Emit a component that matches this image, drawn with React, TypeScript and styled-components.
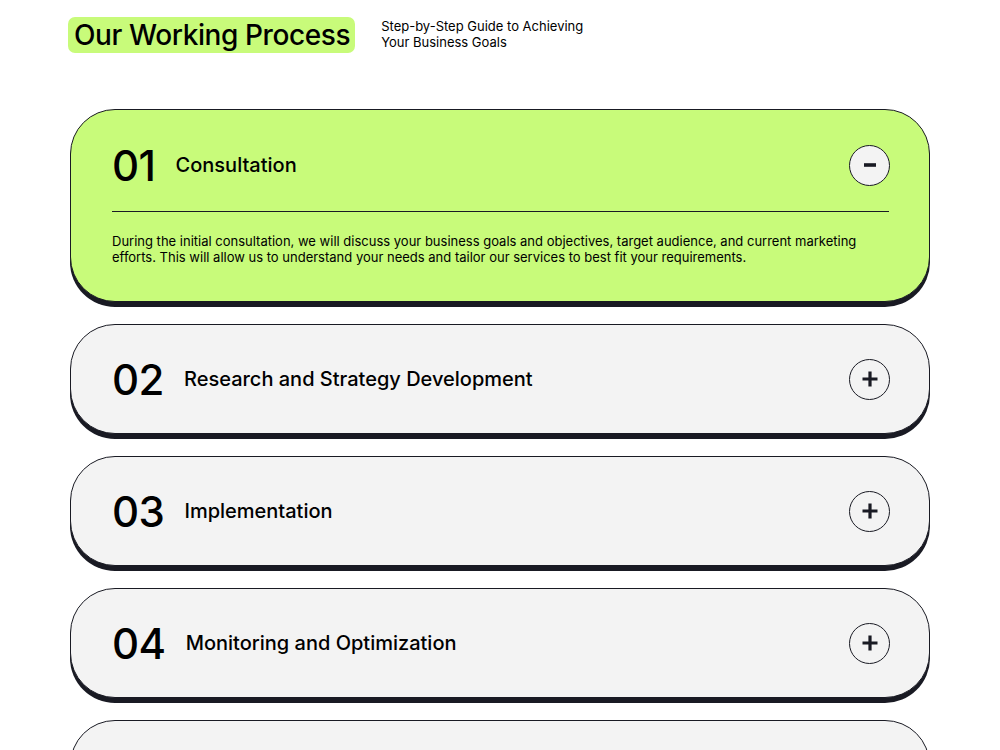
import React from "react";
import styled, { createGlobalStyle } from "styled-components";

const GlobalStyle = createGlobalStyle`
  html, body { margin: 0; padding: 0; background: #ffffff; }
  body { font-family: "Inter", "Noto Sans", "Liberation Sans", sans-serif; color: #000; }
  * { box-sizing: border-box; }
`;

const Page = styled.div`
  width: 860px;
  margin: 0 auto;
  padding-top: 17px;
`;

const Header = styled.header`
  display: flex;
  align-items: flex-start;
  gap: 26px;
  margin-left: -2px;
  margin-bottom: 56px;
`;

const Highlight = styled.h2`
  margin: 0;
  background: #c8fb7a;
  border-radius: 7px;
  padding: 0 5px 0 6px;
  height: 36px;
  display: flex;
  align-items: center;
  font-size: 28px;
  font-weight: 500;
  letter-spacing: -0.4px;
  color: #000;
`;

const Subtitle = styled.p`
  margin: 1px 0 0;
  font-size: 13px;
  line-height: 16px;
  color: #000;
`;

const List = styled.div`
  display: flex;
  flex-direction: column;
  gap: 22px;
`;

const Card = styled.div<{ $open: boolean }>`
  background: ${(p) => (p.$open ? "#c8fb7a" : "#f3f3f3")};
  border: 1px solid #191a23;
  border-radius: 45px;
  box-shadow: 0 5px 0 #191a23;
  padding: ${(p) => (p.$open ? "30px 39px 36px 41px" : "29px 39px 29px 41px")};
`;

const Row = styled.div`
  display: flex;
  align-items: center;
  height: 50px;
`;

const Num = styled.span`
  font-size: 42px;
  font-weight: 500;
  letter-spacing: -0.5px;
  color: #000;
  margin-right: 20px;
`;

const Title = styled.span`
  font-size: 20px;
  font-weight: 500;
  color: #000;
  flex: 1;
`;

const Toggle = styled.div`
  width: 41px;
  height: 41px;
  border-radius: 50%;
  border: 1px solid #191a23;
  background: #f3f3f3;
  display: flex;
  align-items: center;
  justify-content: center;
  flex-shrink: 0;
`;

const Divider = styled.hr`
  border: none;
  border-top: 1px solid #191a23;
  margin: 21px 1px 21px 0;
`;

const Body = styled.p`
  margin: 0;
  font-size: 13px;
  line-height: 16px;
  color: #000;
  max-width: 760px;
`;

const Plus = () => (
  <svg width="18" height="18" viewBox="0 0 18 18">
    <path d="M9 1.5v15M1.5 9h15" stroke="#191a23" strokeWidth="3.2" strokeLinecap="butt" />
  </svg>
);

const Minus = () => (
  <svg width="14" height="6" viewBox="0 0 14 6">
    <path d="M1 3h12" stroke="#191a23" strokeWidth="3.6" />
  </svg>
);

const steps = [
  {
    n: "01",
    t: "Consultation",
    d: "During the initial consultation, we will discuss your business goals and objectives, target audience, and current marketing efforts. This will allow us to understand your needs and tailor our services to best fit your requirements.",
  },
  { n: "02", t: "Research and Strategy Development", d: "" },
  { n: "03", t: "Implementation", d: "" },
  { n: "04", t: "Monitoring and Optimization", d: "" },
  { n: "05", t: "Reporting and Communication", d: "" },
];

export default function App() {
  return (
    <>
      <GlobalStyle />
      <Page>
        <Header>
          <Highlight>Our Working Process</Highlight>
          <Subtitle>
            Step-by-Step Guide to Achieving
            <br />
            Your Business Goals
          </Subtitle>
        </Header>
        <List>
          {steps.map((s, i) => {
            const open = i === 0;
            return (
              <Card key={s.n} $open={open}>
                <Row>
                  <Num>{s.n}</Num>
                  <Title>{s.t}</Title>
                  <Toggle>{open ? <Minus /> : <Plus />}</Toggle>
                </Row>
                {open && (
                  <>
                    <Divider />
                    <Body>{s.d}</Body>
                  </>
                )}
              </Card>
            );
          })}
        </List>
      </Page>
    </>
  );
}
